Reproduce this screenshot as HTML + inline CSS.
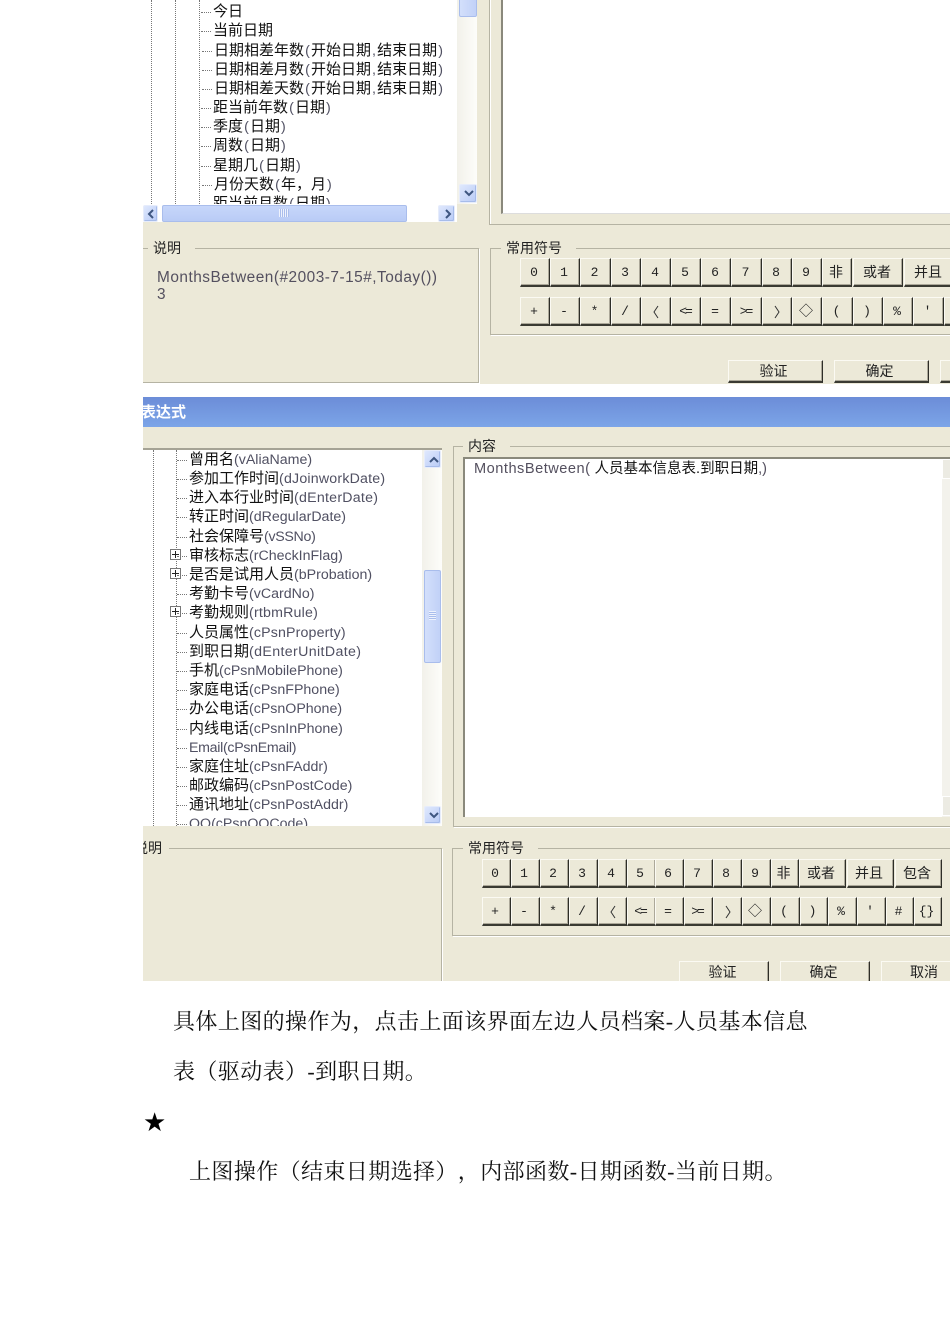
<!DOCTYPE html>
<html lang="zh"><head><meta charset="utf-8"><style>
html,body{margin:0;padding:0;background:#fff}
body{width:950px;height:1344px;position:relative;overflow:hidden;font-family:"Liberation Sans","Noto Sans CJK SC",sans-serif;color:#1a1a1a}
.s{position:absolute;overflow:hidden;background:#ece9d8;filter:blur(.3px)}
.s div{position:absolute;box-sizing:border-box}
.w{background:#fff}
.g{border:1px solid #b5b3a3;box-shadow:1px 1px 0 #fff;}
.l{background:#ece9d8;font-size:14px;line-height:20px;height:20px;padding:0 14px 0 5px;white-space:nowrap;color:#222}
.r{font-size:15px;line-height:20px;height:20px;white-space:nowrap;color:#111}
.r i{font-style:normal;color:#505062;font-size:14.2px}
.a i{padding:0 1.1px}
.r:before{content:"";position:absolute;left:-12px;top:10px;width:10px;border-top:1px dotted #777}
.v{width:1px;border-left:1px dotted #777}
.p{width:11px;height:11px;border:1px solid #777;background:#fff}
.p:before{content:"";position:absolute;left:1px;top:4px;width:7px;height:1px;background:#222}
.p:after{content:"";position:absolute;left:4px;top:1px;width:1px;height:7px;background:#222}
.b{background:#ece9d8;border-top:1px solid #fbfaf3;border-left:1px solid #fbfaf3;border-right:1px solid #2e2e28;border-bottom:2px solid #3a3a32;box-shadow:inset -1px -1px 0 #aca899;text-align:center;font-size:13px;line-height:27px;height:29px;color:#222;font-family:"Liberation Mono","Noto Sans CJK SC",monospace;white-space:nowrap;padding-right:2px}
.s2 .b{padding-right:3px}
.c{font-size:14px;font-family:"Liberation Sans","Noto Sans CJK SC",sans-serif}
.q svg{position:absolute;left:10px;top:7px}
.e{letter-spacing:-2px}
.o{font-family:"Noto Sans CJK SC",sans-serif;font-size:14px}
.k{background:linear-gradient(135deg,#dfe8fd,#b9cbf6);border:1px solid #e6ecfb;border-radius:2px;box-shadow:inset -1px -1px 0 #a7bcea}
.k svg{position:absolute;left:3px;top:4px}
.t{background:linear-gradient(90deg,#d3dffb,#c1d1f7);border:1px solid #a9bdec;border-radius:2px}
.sb{background:linear-gradient(90deg,#f2f1ea,#fdfdfa)}
.d{position:absolute;left:0;font-family:"Liberation Serif","Noto Serif CJK SC",serif;font-size:22px;letter-spacing:.4px;line-height:30px;height:30px;white-space:nowrap;color:#111;text-spacing-trim:space-all;font-feature-settings:"palt" 0,"chws" 0}
</style></head><body>

<!-- first dialog -->
<div class="s" style="left:143px;top:0;width:807px;height:384px">
<div class="w a" style="left:0;top:0;width:314px;height:204px;overflow:hidden">
<div class="v" style="left:8px;top:0;height:204px"></div>
<div class="v" style="left:32px;top:0;height:204px"></div>
<div class="v" style="left:56px;top:0;height:204px"></div>
<div class="r" style="left:70px;top:2px">今日</div>
<div class="r" style="left:70px;top:21px">当前日期</div>
<div class="r" style="left:71px;top:41px">日期相差年数<i>(</i>开始日期<i>,</i>结束日期<i>)</i></div>
<div class="r" style="left:71px;top:60px">日期相差月数<i>(</i>开始日期<i>,</i>结束日期<i>)</i></div>
<div class="r" style="left:71px;top:79px">日期相差天数<i>(</i>开始日期<i>,</i>结束日期<i>)</i></div>
<div class="r" style="left:70px;top:98px">距当前年数<i>(</i>日期<i>)</i></div>
<div class="r" style="left:70px;top:117px">季度<i>(</i>日期<i>)</i></div>
<div class="r" style="left:70px;top:136px">周数<i>(</i>日期<i>)</i></div>
<div class="r" style="left:70px;top:156px">星期几<i>(</i>日期<i>)</i></div>
<div class="r" style="left:71px;top:175px">月份天数<i>(</i>年，月<i>)</i></div>
<div class="r" style="left:70px;top:194px">距当前月数<i>(</i>日期<i>)</i></div>
</div>
<div class="sb" style="left:314px;top:0;width:20px;height:204px"></div>
<div class="t" style="left:316px;top:-4px;width:18px;height:21px"></div>
<div class="k" style="left:316px;top:184px;width:18px;height:19px"><svg width="12" height="10"><path d="M2 2l4 4 4-4" fill="none" stroke="#3e5680" stroke-width="2"/></svg></div>
<div class="w" style="left:0;top:204px;width:314px;height:18px"></div>
<div class="k" style="left:0;top:205px;width:15px;height:17px"><svg width="10" height="12" style="left:2px;top:2px"><path d="M7 2L3 6l4 4" fill="none" stroke="#3e5680" stroke-width="2"/></svg></div>
<div class="t" style="left:19px;top:205px;width:245px;height:17px;background:linear-gradient(#c6d6fa,#b9cbf6)"></div>
<div style="left:136px;top:209px;width:10px;height:8px;background:repeating-linear-gradient(90deg,#eef2fd 0 1px,#a9bdec 1px 2px)"></div>
<div class="k" style="left:295px;top:205px;width:17px;height:17px"><svg width="10" height="12" style="left:4px;top:2px"><path d="M3 2l4 4-4 4" fill="none" stroke="#3e5680" stroke-width="2"/></svg></div>

<div style="left:346px;top:-5px;width:480px;height:230px;border:1px solid #b5b3a3;box-shadow:inset 1px 1px 0 #fff"></div>
<div class="w" style="left:358px;top:-2px;width:470px;height:216px;border-left:2px solid #8a897c;border-bottom:1px solid #ddd"></div>

<div class="g" style="left:-5px;top:248px;width:341px;height:135px"></div>
<div class="l" style="left:5px;top:238px">说明</div>
<div style="left:14px;top:269px;white-space:nowrap;font-size:15.4px;letter-spacing:.5px;line-height:17px;color:#54505f">MonthsBetween(#2003-7-15#,Today())<br>3</div>

<div class="g" style="left:347px;top:248px;width:480px;height:87px"></div>
<div class="l" style="left:358px;top:238px">常用符号</div>

<div class="b" style="left:377px;top:258px;width:30px">0</div>
<div class="b" style="left:407px;top:258px;width:30px">1</div>
<div class="b" style="left:437px;top:258px;width:31px">2</div>
<div class="b" style="left:468px;top:258px;width:30px">3</div>
<div class="b" style="left:498px;top:258px;width:30px">4</div>
<div class="b" style="left:528px;top:258px;width:30px">5</div>
<div class="b" style="left:558px;top:258px;width:30px">6</div>
<div class="b" style="left:588px;top:258px;width:31px">7</div>
<div class="b" style="left:619px;top:258px;width:30px">8</div>
<div class="b" style="left:649px;top:258px;width:30px">9</div>
<div class="b c" style="left:679px;top:258px;width:30px">非</div>
<div class="b c" style="left:710px;top:258px;width:50px">或者</div>
<div class="b c" style="left:761px;top:258px;width:50px">并且</div>

<div class="b" style="left:377px;top:297px;width:30px">+</div>
<div class="b" style="left:407px;top:297px;width:30px">-</div>
<div class="b" style="left:437px;top:297px;width:31px">*</div>
<div class="b" style="left:468px;top:297px;width:30px">/</div>
<div class="b q" style="left:498px;top:297px;width:30px"><svg width="8" height="14"><path d="M6 1L2 7l4 6" fill="none" stroke="#333" stroke-width="1"/></svg></div>
<div class="b e" style="left:528px;top:297px;width:30px">&lt;=</div>
<div class="b" style="left:558px;top:297px;width:30px">=</div>
<div class="b e" style="left:588px;top:297px;width:31px">&gt;=</div>
<div class="b q" style="left:619px;top:297px;width:30px"><svg width="8" height="14"><path d="M2 1l4 6-4 6" fill="none" stroke="#333" stroke-width="1"/></svg></div>
<div class="b o" style="left:649px;top:297px;width:30px">◇</div>
<div class="b" style="left:679px;top:297px;width:31px">(</div>
<div class="b" style="left:710px;top:297px;width:30px">)</div>
<div class="b" style="left:740px;top:297px;width:30px">%</div>
<div class="b" style="left:770px;top:297px;width:31px">'</div>
<div class="b" style="left:801px;top:297px;width:30px"></div>

<div class="b c" style="left:585px;top:360px;width:95px;height:23px;line-height:20px;padding-right:4px">验证</div>
<div class="b c" style="left:691px;top:360px;width:95px;height:23px;line-height:20px;padding-right:4px">确定</div>
<div class="b c" style="left:797px;top:360px;width:95px;height:23px;line-height:20px"></div>
</div>

<!-- second dialog -->
<div class="s s2" style="left:143px;top:397px;width:807px;height:584px">
<div style="left:0;top:0;width:807px;height:30px;background:linear-gradient(#6c8dd8,#7ca5e8)"></div>
<div style="left:-2px;top:6px;color:#fff;font-weight:bold;font-size:15px;line-height:20px;white-space:nowrap">表达式</div>

<div class="w" style="left:-4px;top:51px;width:303px;height:378px;border-top:2px solid #a5a395;overflow:hidden">
<div class="v" style="left:14px;top:0;height:378px"></div>
<div class="v" style="left:37px;top:0;height:378px"></div>
<div class="r" style="left:50px;top:0px">曾用名<i>(vAliaName)</i></div>
<div class="r" style="left:50px;top:19px">参加工作时间<i style="letter-spacing:.2px">(dJoinworkDate)</i></div>
<div class="r" style="left:50px;top:38px">进入本行业时间<i style="letter-spacing:.25px">(dEnterDate)</i></div>
<div class="r" style="left:50px;top:57px">转正时间<i>(dRegularDate)</i></div>
<div class="r" style="left:50px;top:77px">社会保障号<i style="letter-spacing:-.3px">(vSSNo)</i></div>
<div class="p" style="left:31px;top:99px"></div>
<div class="r" style="left:50px;top:96px">审核标志<i>(rCheckInFlag)</i></div>
<div class="p" style="left:31px;top:118px"></div>
<div class="r" style="left:50px;top:115px">是否是试用人员<i>(bProbation)</i></div>
<div class="r" style="left:50px;top:134px">考勤卡号<i>(vCardNo)</i></div>
<div class="p" style="left:31px;top:156px"></div>
<div class="r" style="left:50px;top:153px">考勤规则<i style="letter-spacing:.2px">(rtbmRule)</i></div>
<div class="r" style="left:50px;top:173px">人员属性<i style="letter-spacing:.15px">(cPsnProperty)</i></div>
<div class="r" style="left:50px;top:192px">到职日期<i style="letter-spacing:.37px">(dEnterUnitDate)</i></div>
<div class="r" style="left:50px;top:211px">手机<i>(cPsnMobilePhone)</i></div>
<div class="r" style="left:50px;top:230px">家庭电话<i>(cPsnFPhone)</i></div>
<div class="r" style="left:50px;top:249px">办公电话<i>(cPsnOPhone)</i></div>
<div class="r" style="left:50px;top:269px">内线电话<i>(cPsnInPhone)</i></div>
<div class="r" style="left:50px;top:288px"><i style="letter-spacing:-.3px">Email(cPsnEmail)</i></div>
<div class="r" style="left:50px;top:307px">家庭住址<i>(cPsnFAddr)</i></div>
<div class="r" style="left:50px;top:326px">邮政编码<i>(cPsnPostCode)</i></div>
<div class="r" style="left:50px;top:345px">通讯地址<i>(cPsnPostAddr)</i></div>
<div class="r" style="left:50px;top:364px"><i>QQ(cPsnQQCode)</i></div>
</div>
<div class="sb" style="left:279px;top:53px;width:20px;height:376px"></div>
<div class="k" style="left:281px;top:53px;width:17px;height:18px"><svg width="12" height="10"><path d="M2 7l4-4 4 4" fill="none" stroke="#3e5680" stroke-width="2"/></svg></div>
<div class="t" style="left:281px;top:173px;width:17px;height:93px"></div>
<div style="left:286px;top:214px;width:7px;height:9px;background:repeating-linear-gradient(#eef2fd 0 1px,#a9bdec 1px 2px)"></div>
<div class="k" style="left:281px;top:409px;width:17px;height:18px"><svg width="12" height="10"><path d="M2 2l4 4 4-4" fill="none" stroke="#3e5680" stroke-width="2"/></svg></div>

<div class="g" style="left:310px;top:49px;width:520px;height:381px"></div>
<div class="l" style="left:320px;top:39px">内容</div>
<div class="w" style="left:320px;top:60px;width:500px;height:360px;border-left:2px solid #8a897c;border-top:2px solid #8a897c"></div>
<div style="left:331px;top:63px;font-size:14.5px;line-height:18px;white-space:nowrap;color:#111"><span style="color:#54505f;font-size:14.6px;letter-spacing:.5px">MonthsBetween(</span> 人员基本信息表.到职日期<span style="color:#54505f">,)</span></div>
<div style="left:799px;top:62px;width:10px;height:358px;background:#f3f2ec"></div>
<div style="left:799px;top:62px;width:10px;height:20px;background:#ecebe3;border:1px solid #fff"></div>
<div style="left:799px;top:399px;width:10px;height:20px;background:#ecebe3;border:1px solid #fff"></div>

<div class="g" style="left:-5px;top:451px;width:304px;height:140px"></div>
<div class="l" style="left:-14px;top:441px;padding-right:7px">说明</div>
<div class="g" style="left:309px;top:451px;width:520px;height:88px"></div>
<div class="l" style="left:320px;top:441px">常用符号</div>

<div class="b" style="left:339px;top:462px;width:29px">0</div>
<div class="b" style="left:368px;top:462px;width:29px">1</div>
<div class="b" style="left:397px;top:462px;width:29px">2</div>
<div class="b" style="left:426px;top:462px;width:29px">3</div>
<div class="b" style="left:455px;top:462px;width:29px">4</div>
<div class="b" style="left:484px;top:462px;width:29px">5</div>
<div class="b" style="left:512px;top:462px;width:29px">6</div>
<div class="b" style="left:541px;top:462px;width:29px">7</div>
<div class="b" style="left:570px;top:462px;width:29px">8</div>
<div class="b" style="left:599px;top:462px;width:29px">9</div>
<div class="b c" style="left:628px;top:462px;width:28px">非</div>
<div class="b c" style="left:656px;top:462px;width:47px">或者</div>
<div class="b c" style="left:704px;top:462px;width:47px">并且</div>
<div class="b c" style="left:752px;top:462px;width:47px">包含</div>

<div class="b" style="left:339px;top:500px;width:29px">+</div>
<div class="b" style="left:368px;top:500px;width:29px">-</div>
<div class="b" style="left:397px;top:500px;width:29px">*</div>
<div class="b" style="left:426px;top:500px;width:29px">/</div>
<div class="b q" style="left:455px;top:500px;width:29px"><svg width="8" height="14"><path d="M6 1L2 7l4 6" fill="none" stroke="#333" stroke-width="1"/></svg></div>
<div class="b e" style="left:484px;top:500px;width:29px">&lt;=</div>
<div class="b" style="left:512px;top:500px;width:29px">=</div>
<div class="b e" style="left:541px;top:500px;width:29px">&gt;=</div>
<div class="b q" style="left:570px;top:500px;width:29px"><svg width="8" height="14"><path d="M2 1l4 6-4 6" fill="none" stroke="#333" stroke-width="1"/></svg></div>
<div class="b o" style="left:599px;top:500px;width:29px">◇</div>
<div class="b" style="left:628px;top:500px;width:29px">(</div>
<div class="b" style="left:657px;top:500px;width:28px">)</div>
<div class="b" style="left:685px;top:500px;width:29px">%</div>
<div class="b" style="left:714px;top:500px;width:29px">'</div>
<div class="b" style="left:743px;top:500px;width:28px">#</div>
<div class="b" style="left:771px;top:500px;width:28px">{}</div>

<div class="b c" style="left:536px;top:564px;width:90px;height:26px;line-height:20px">验证</div>
<div class="b c" style="left:637px;top:564px;width:90px;height:26px;line-height:20px">确定</div>
<div class="b c" style="left:738px;top:564px;width:90px;height:26px;line-height:20px;text-align:right;padding-right:32px">取消</div>
</div>

<!-- document text -->
<div class="d" style="left:173px;top:1007px">具体上图的操作为，点击上面该界面左边人员档案-人员基本信息</div>
<div class="d" style="left:173px;top:1057px">表（驱动表）-到职日期。</div>
<div class="d" style="left:143px;top:1108px;font-family:'DejaVu Sans',sans-serif;font-size:26px;letter-spacing:0;color:#000">★</div>
<div class="d" style="left:189px;top:1157px">上图操作（结束日期选择），内部函数-日期函数-当前日期。</div>
</body></html>
